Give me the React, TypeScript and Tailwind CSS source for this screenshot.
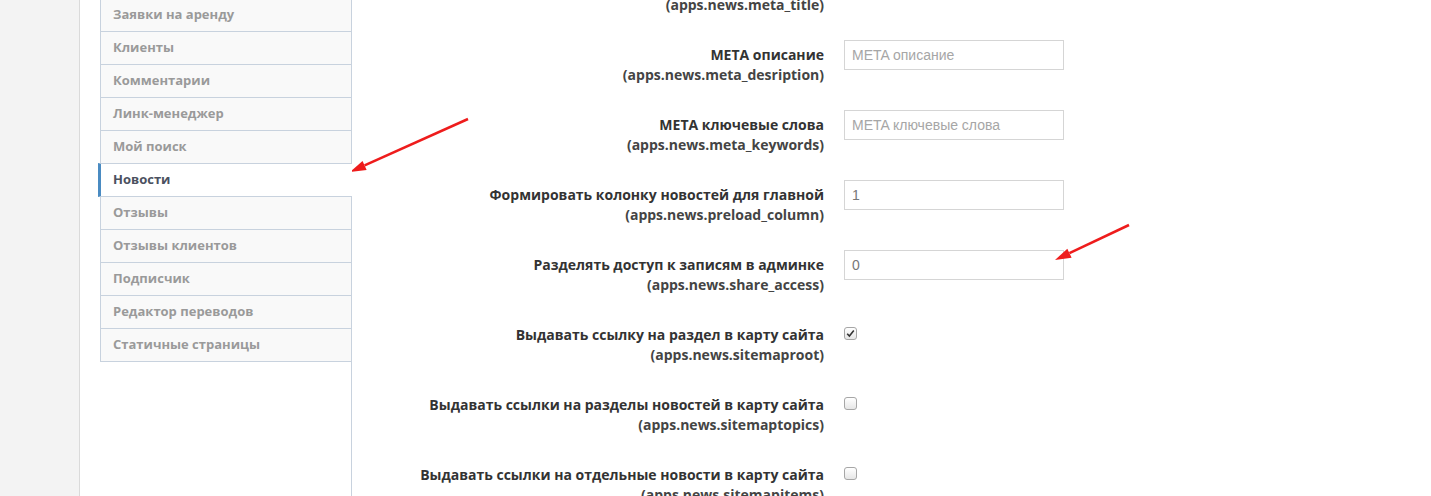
import React from "react";

const menu = [
  "Заявки на аренду",
  "Клиенты",
  "Комментарии",
  "Линк-менеджер",
  "Мой поиск",
  "Новости",
  "Отзывы",
  "Отзывы клиентов",
  "Подписчик",
  "Редактор переводов",
  "Статичные страницы",
];

type Field = {
  label: string;
  key: string;
  kind: "text" | "check";
  value?: string;
  placeholder?: string;
  checked?: boolean;
};

const fields: Field[] = [
  { label: "META заголовок", key: "apps.news.meta_title", kind: "text", placeholder: "META заголовок" },
  { label: "META описание", key: "apps.news.meta_desription", kind: "text", placeholder: "META описание" },
  { label: "META ключевые слова", key: "apps.news.meta_keywords", kind: "text", placeholder: "META ключевые слова" },
  { label: "Формировать колонку новостей для главной", key: "apps.news.preload_column", kind: "text", value: "1" },
  { label: "Разделять доступ к записям в админке", key: "apps.news.share_access", kind: "text", value: "0" },
  { label: "Выдавать ссылку на раздел в карту сайта", key: "apps.news.sitemaproot", kind: "check", checked: true },
  { label: "Выдавать ссылки на разделы новостей в карту сайта", key: "apps.news.sitemaptopics", kind: "check" },
  { label: "Выдавать ссылки на отдельные новости в карту сайта", key: "apps.news.sitemapitems", kind: "check" },
];

function Checkbox({ checked }: { checked?: boolean }) {
  return (
    <div className="mt-[7px] w-[13px] h-[13px] rounded-[3px] border border-[#a6a6a6] bg-gradient-to-b from-white to-[#e6e6e6] flex items-center justify-center">
      {checked && (
        <svg width="9" height="9" viewBox="0 0 9 9">
          <path d="M1.2 4.8 L3.4 7 L7.8 1.6" stroke="#333" strokeWidth="1.6" fill="none" />
        </svg>
      )}
    </div>
  );
}

function Arrow({ x1, y1, x2, y2 }: { x1: number; y1: number; x2: number; y2: number }) {
  const a = Math.atan2(y2 - y1, x2 - x1);
  const len = 16;
  const w = 5;
  const bx = x2 - len * Math.cos(a);
  const by = y2 - len * Math.sin(a);
  const p1 = `${bx + w * Math.sin(a)},${by - w * Math.cos(a)}`;
  const p2 = `${bx - w * Math.sin(a)},${by + w * Math.cos(a)}`;
  return (
    <g>
      <line x1={x1} y1={y1} x2={bx} y2={by} stroke="#ee1c1c" strokeWidth="2.5" />
      <polygon points={`${x2},${y2} ${p1} ${p2}`} fill="#ee1c1c" />
    </g>
  );
}

export default function App() {
  return (
    <div className="relative w-[1431px] h-[496px] overflow-hidden bg-white flex font-['Open_Sans',sans-serif]">
      <div className="w-[80px] shrink-0 bg-[#f3f3f3] border-r border-[#dadada]" />
      <div className="w-[20px] shrink-0" />
      <div className="w-[252px] shrink-0 border-r border-[#c8d2de] relative">
        <ul className="mt-[-2px]">
          {menu.map((m) => {
            const active = m === "Новости";
            return (
              <li
                key={m}
                className={
                  active
                    ? "relative z-10 h-[34px] -ml-[2px] -mr-[1px] bg-white border-y border-[#c8d2de] border-l-[3px] border-l-[#4a8bc2] pl-[12px] flex items-center text-[13px] font-bold text-[#4b5160] -mt-px"
                    : "h-[34px] bg-[#f9f9f9] border border-[#c8d2de] border-r-0 pl-[12px] flex items-center text-[13px] font-bold text-[#9a9a9a] -mt-px first:mt-0"
                }
              >
                {m}
              </li>
            );
          })}
        </ul>
      </div>
      <div className="flex-1 mt-[-30px]">
        {fields.map((f) => (
          <div key={f.key} className="flex h-[70px]">
            <div className="w-[472px] shrink-0 pt-[5px] text-right text-[14px] leading-[20px] font-bold text-[#333]">
              <div>{f.label}</div>
              <div className="text-[#444]">({f.key})</div>
            </div>
            <div className="ml-[20px]">
              {f.kind === "text" ? (
                <div className="w-[220px] h-[30px] border border-[#d5d5d5] bg-white px-[7px] flex items-center text-[14px] font-['Liberation_Sans',sans-serif]">
                  {f.value ? (
                    <span className="text-[#777]">{f.value}</span>
                  ) : (
                    <span className="text-[#a6a6a6]">{f.placeholder}</span>
                  )}
                </div>
              ) : (
                <Checkbox checked={f.checked} />
              )}
            </div>
          </div>
        ))}
      </div>
      <svg className="absolute inset-0 pointer-events-none" width="1431" height="496">
        <Arrow x1={468} y1={119} x2={350} y2={172} />
        <Arrow x1={1129} y1={225} x2={1055} y2={260} />
      </svg>
    </div>
  );
}
